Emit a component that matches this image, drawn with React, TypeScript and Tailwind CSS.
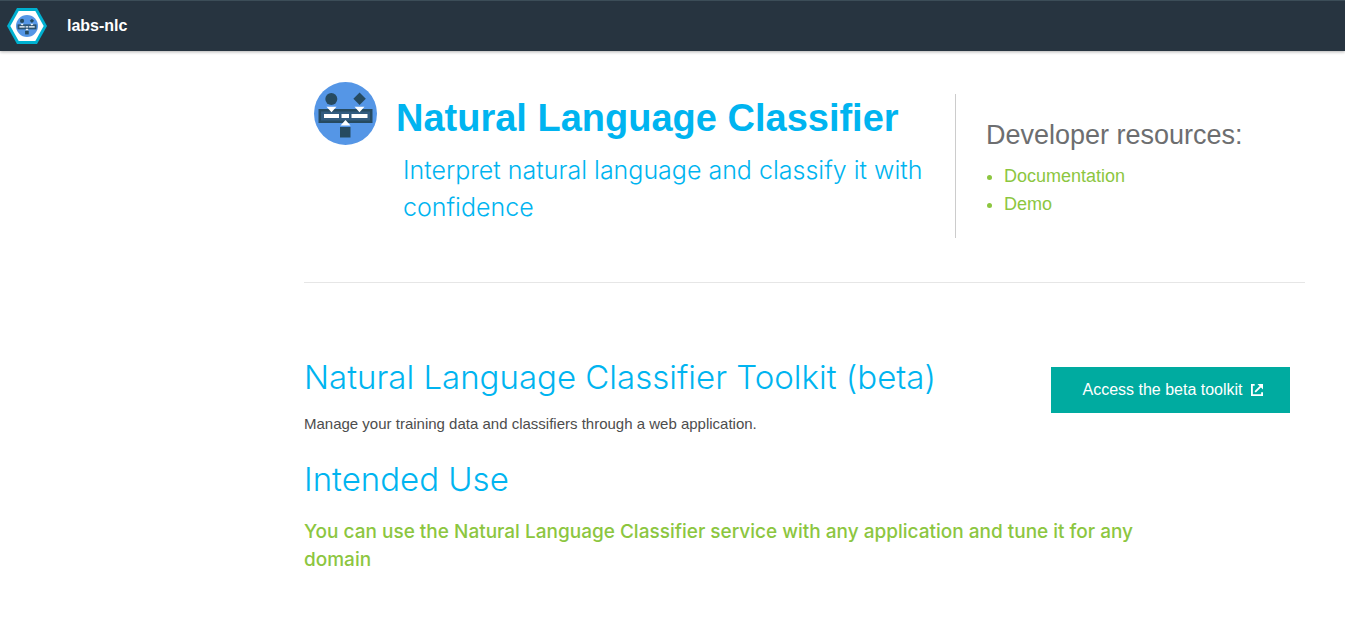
import React from "react";

function ClassifierIcon({ className }: { className?: string }) {
  return (
    <svg viewBox="0 0 63 63" className={className} aria-hidden="true">
      <circle cx="31.5" cy="31.5" r="31.5" fill="#5596e6" />
      <circle cx="17.3" cy="17" r="6" fill="#264a60" />
      <path d="M45.6 10.5l6.2 6.2-6.2 6.2-6.2-6.2z" fill="#264a60" />
      <rect x="4.5" y="27" width="54" height="14" fill="#264a60" />
      <rect x="7" y="29.5" width="49" height="9" fill="#325c80" />
      <path d="M12.5 24.700h10l-5 5.500zM40.5 24.700h10l-5 5.500z" fill="#fff" />
      <path d="M10 32h15v4H10zM27.500 32h7.500v4h-7.500zM37.500 32h16v4h-16z" fill="#fff" />
      <path d="M26.500 43.500h10l-5-5.500z" fill="#fff" />
      <rect x="26" y="45" width="10.500" height="10.500" fill="#264a60" />
    </svg>
  );
}

function HexLogo() {
  return (
    <span className="grid h-9 w-10 place-items-center">
      <svg viewBox="0 0 40 36" className="col-start-1 row-start-1 h-9 w-10" aria-hidden="true">
        <path d="M10 0h20L40 18 30 36H10L0 18z" fill="#00b0d0" />
        <path d="M11.700 3h16.600l8.400 15-8.400 15H11.700L3.300 18z" fill="#fff" />
      </svg>
      <ClassifierIcon className="col-start-1 row-start-1 h-[22px] w-[22px]" />
    </span>
  );
}

function LaunchIcon() {
  return (
    <svg viewBox="0 0 13 13" className="h-3 w-3" fill="none" stroke="#fff" strokeWidth="2" aria-hidden="true">
      <path d="M4 1H1v11h11V9" />
      <path d="M4.500 8.500L10.500 2.500" />
      <path d="M7 0H13v6z" fill="#fff" stroke="none" />
    </svg>
  );
}

const resources = ["Documentation", "Demo"];

export default function App() {
  return (
    <div className="min-h-screen bg-white font-['Liberation_Sans',sans-serif]">
      <header className="flex h-[51px] items-center gap-5 border-t border-[#3c4d58] bg-[#273440] pl-[7px] shadow-[0_1px_3px_rgba(0,0,0,0.3)]">
        <HexLogo />
        <a href="#home" className="text-base font-bold text-white">labs-nlc</a>
      </header>

      <main className="pr-10 pb-12 pl-[304px]">
        <section className="flex border-b border-[#e6e6e6] pt-[31px] pb-11">
          <ClassifierIcon className="ml-2.5 h-[63px] w-[63px] shrink-0" />
          <div className="flex-1 pt-3 pl-[19px]">
            <h1 className="text-[38px] leading-[48px] font-bold text-[#00b4f0]">Natural Language Classifier</h1>
            <p className="pt-2.5 pl-[7px] font-['Inter',sans-serif] text-[25px] leading-[37px] font-light text-[#00b4f0]">
              Interpret natural language and classify it with confidence
            </p>
          </div>
          <aside className="mt-3 h-36 w-[350px] shrink-0 border-l border-[#cccccc] pt-6 pl-[30px]">
            <h2 className="text-[27px] leading-[34px] text-[#6d6e70]">Developer resources:</h2>
            <ul className="list-disc pt-2.5 pl-[18px] text-lg leading-7 text-[#8cc63f]">
              {resources.map((name) => (
                <li key={name}>
                  <a href={"#" + name.toLowerCase()}>{name}</a>
                </li>
              ))}
            </ul>
          </aside>
        </section>

        <section className="flex items-start justify-between pt-[70px] pr-[15px]">
          <div>
            <h2 className="font-['Inter',sans-serif] text-[33px] leading-[48px] font-light text-[#00b4f0]">
              Natural Language Classifier Toolkit (beta)
            </h2>
            <p className="pt-3 text-[15px] leading-[22px] text-[#4d4d4d]">
              Manage your training data and classifiers through a web application.
            </p>
          </div>
          <a
            href="#toolkit"
            className="mt-3.5 flex h-[46px] w-[239px] shrink-0 items-center justify-center gap-2 bg-[#00aba0] pl-1 text-base text-white"
          >
            Access the beta toolkit
            <LaunchIcon />
          </a>
        </section>

        <section className="pt-5">
          <h2 className="font-['Inter',sans-serif] text-[33px] leading-[48px] font-light text-[#00b4f0]">Intended Use</h2>
          <p className="max-w-[840px] pt-[15px] font-['Inter',sans-serif] text-[19px] leading-7 font-medium text-[#8cc63f]">
            You can use the Natural Language Classifier service with any application and tune it for any domain
          </p>
        </section>
      </main>
    </div>
  );
}
